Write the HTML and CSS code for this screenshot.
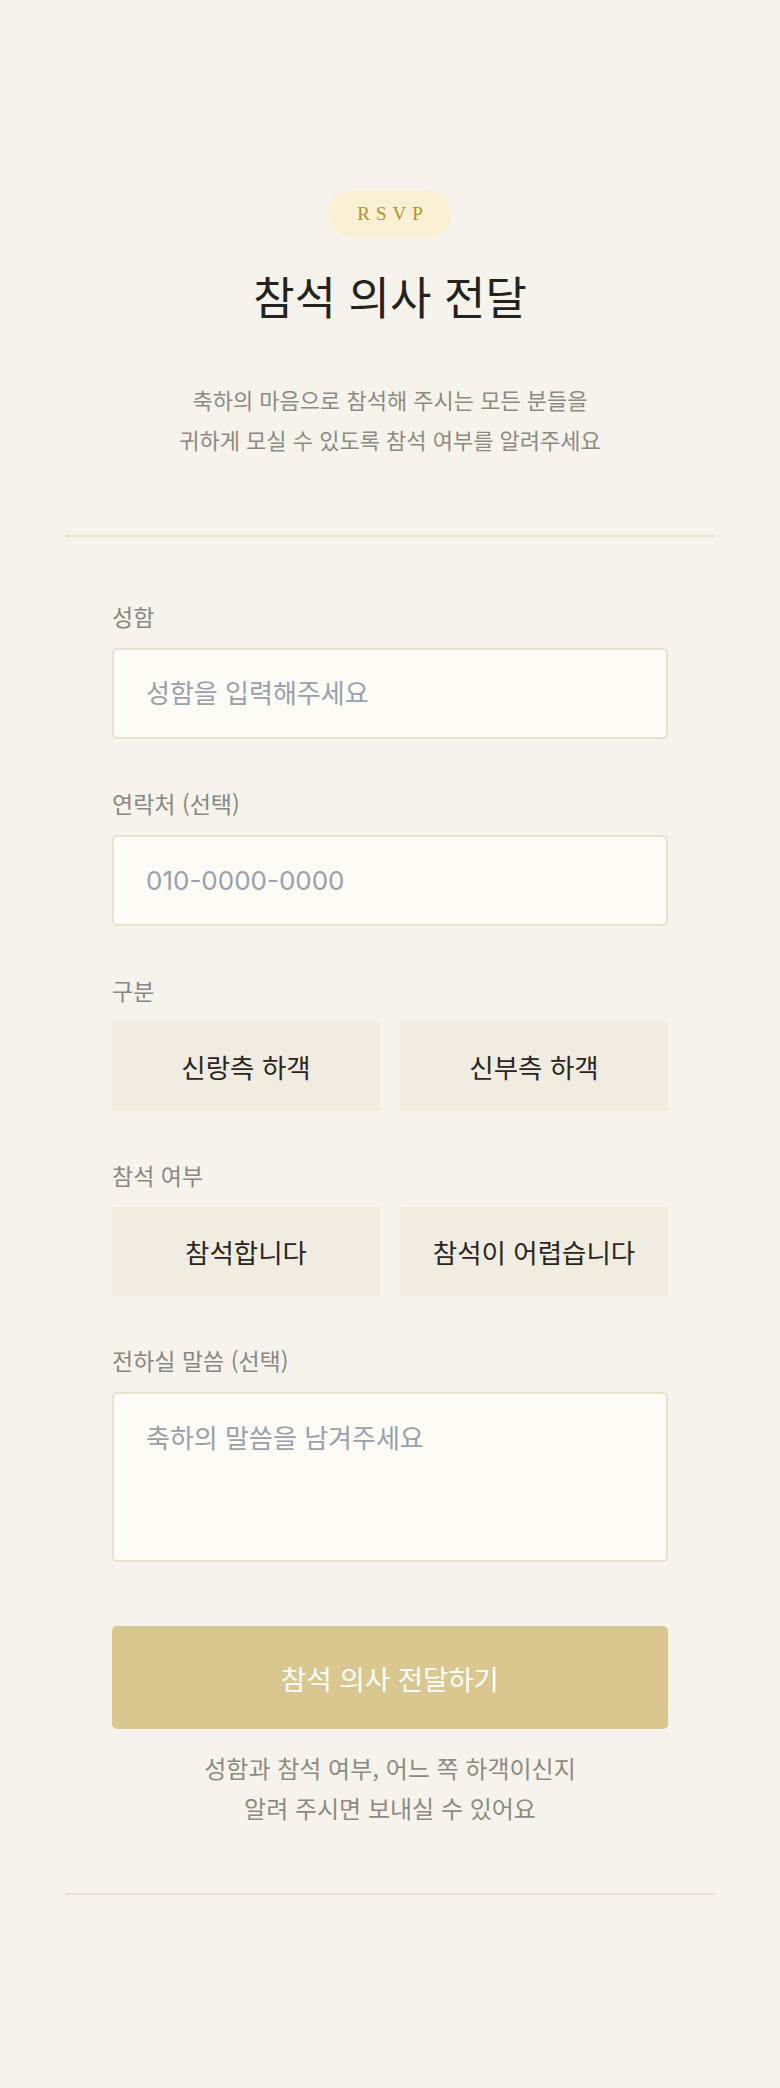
FILE: index.html
```html
<!DOCTYPE html>
<html lang="ko">
<head>
    <meta charset="UTF-8">
    <meta name="viewport" content="width=device-width, initial-scale=1.0">
    <title>RSVP</title>
    <link rel="stylesheet" href="styles.css">
</head>
<body>
    <section class="rsvp">
        <div class="intro">
            <span class="badge">RSVP</span>
            <h1 class="title">참석 의사 전달</h1>
            <p class="lead">축하의 마음으로 참석해 주시는 모든 분들을<br>귀하게 모실 수 있도록 참석 여부를 알려주세요</p>
        </div>

        <hr class="rule">

        <form class="form" onsubmit="return false;">
            <div class="field">
                <label for="guestName">성함</label>
                <input type="text" id="guestName" placeholder="성함을 입력해주세요">
            </div>

            <div class="field">
                <label for="guestPhone">연락처 (선택)</label>
                <input type="tel" id="guestPhone" placeholder="010-0000-0000">
            </div>

            <div class="field">
                <label>구분</label>
                <div class="choices">
                    <button type="button" class="choice">신랑측 하객</button>
                    <button type="button" class="choice">신부측 하객</button>
                </div>
            </div>

            <div class="field">
                <label>참석 여부</label>
                <div class="choices">
                    <button type="button" class="choice">참석합니다</button>
                    <button type="button" class="choice">참석이 어렵습니다</button>
                </div>
            </div>

            <div class="field field-last">
                <label for="guestMessage">전하실 말씀 (선택)</label>
                <textarea id="guestMessage" placeholder="축하의 말씀을 남겨주세요"></textarea>
            </div>

            <button type="submit" class="submit" disabled>참석 의사 전달하기</button>
            <p class="note">성함과 참석 여부, 어느 쪽 하객이신지<br>알려 주시면 보내실 수 있어요</p>
        </form>

        <hr class="rule">
    </section>
</body>
</html>
```

FILE: styles.css
```css
body {
    margin: 0;
    min-height: 2088px;
    background-color: #f6f3ec;
    font-family: "Noto Sans CJK KR", "Noto Sans", sans-serif;
    color: #2a2621;
}
.rsvp {
    padding: 191px 65px 0;
}
.intro {
    display: flex;
    flex-direction: column;
    align-items: center;
    text-align: center;
}
.badge {
    display: inline-block;
    height: 46px;
    line-height: 46px;
    padding: 0 23px 0 29px;
    border-radius: 23px;
    background-color: #faf0d3;
    color: #b8921f;
    font-family: "Liberation Serif", serif;
    font-size: 19px;
    letter-spacing: 6px;
}
.title {
    margin: 29px 0 0;
    font-size: 45px;
    font-weight: 400;
    line-height: 59px;
    color: #25221e;
}
.lead {
    margin: 54px 0 0;
    font-size: 22px;
    line-height: 40px;
    color: #8e8a83;
}
.rule {
    margin: 0;
    border: none;
    border-top: 2px solid #e7e1cf;
}
.intro + .rule {
    margin-top: 76px;
}
.form {
    padding: 64px 47px 65px;
}
.field {
    margin-bottom: 49px;
}
.field-last {
    margin-bottom: 64px;
}
.field label {
    display: block;
    margin-bottom: 17px;
    font-size: 23px;
    line-height: 30px;
    color: #8a8681;
}
input, textarea {
    display: block;
    box-sizing: border-box;
    width: 100%;
    margin: 0;
    border: 2px solid #e7e1d1;
    border-radius: 5px;
    background-color: #fcfbf6;
    font-family: Inter, "Noto Sans CJK KR", sans-serif;
    font-size: 26px;
    color: #2a2621;
    outline: none;
}
input {
    height: 91px;
    padding: 0 32px;
}
textarea {
    height: 170px;
    padding: 27px 32px;
    line-height: 36px;
    resize: none;
}
input::placeholder, textarea::placeholder {
    color: #9aa0a9;
}
.choices {
    display: grid;
    grid-template-columns: 1fr 1fr;
    gap: 20px;
}
.choice {
    height: 89px;
    border: none;
    border-radius: 2px;
    background-color: #f1ece1;
    font-family: "Noto Sans CJK KR", "Noto Sans", sans-serif;
    font-size: 26.5px;
    color: #2a2621;
    cursor: pointer;
}
.submit {
    display: block;
    width: 100%;
    height: 103px;
    border: none;
    border-radius: 5px;
    background-color: #d9c78f;
    font-family: "Noto Sans CJK KR", "Noto Sans", sans-serif;
    font-size: 27.5px;
    color: #ffffff;
}
.note {
    margin: 19px 0 0;
    text-align: center;
    font-size: 24px;
    line-height: 40px;
    color: #8e8a83;
}
```
